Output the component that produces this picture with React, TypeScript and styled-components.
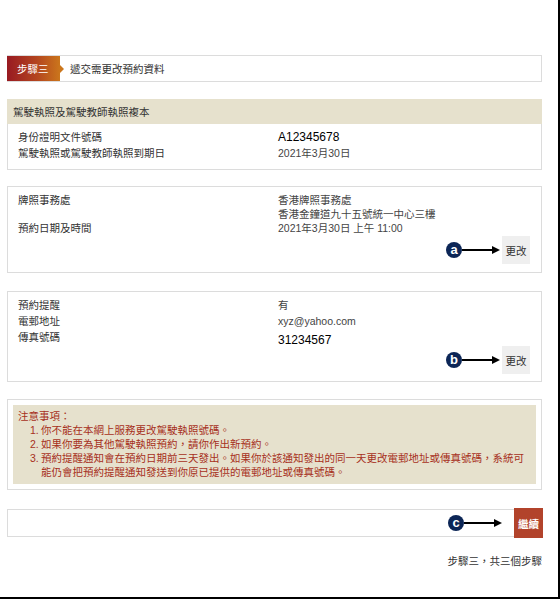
import React from "react";
import styled, { createGlobalStyle } from "styled-components";

const Global = createGlobalStyle`
  html, body { margin: 0; padding: 0; background: #fff; }
  body { font-family: "Liberation Sans", "Noto Sans CJK TC", sans-serif; }
  * { box-sizing: border-box; }
`;

const Frame = styled.div`
  width: 560px;
  height: 599px;
  border-right: 2px solid #000;
  border-bottom: 2px solid #000;
  padding: 55px 16px 0 7px;
  display: flex;
  flex-direction: column;
  font-size: 10.5px;
  color: #333;
`;

const StepBar = styled.div`
  height: 27px;
  border: 1px solid #dcdcdc;
  display: flex;
  align-items: center;
`;

const StepBadge = styled.div`
  position: relative;
  width: 53px;
  height: 25px;
  margin-left: -1px;
  background: linear-gradient(90deg, #981a22 0%, #b3441f 55%, #cb761c 100%);
  color: #fff;
  display: flex;
  align-items: center;
  padding-left: 10px;
  font-size: 10.5px;
  &::after {
    content: "";
    position: absolute;
    right: -4px;
    top: 50%;
    margin-top: -4px;
    border-left: 4px solid #cb761c;
    border-top: 4px solid transparent;
    border-bottom: 4px solid transparent;
  }
`;

const StepTitle = styled.div`
  margin-left: 10px;
  color: #333;
`;

const Box = styled.div<{ $gap: number }>`
  margin-top: ${(p) => p.$gap}px;
  border: 1px solid #dcdcdc;
  display: flex;
  flex-direction: column;
`;

const BoxHeader = styled.div`
  height: 25px;
  background: #e6e1cd;
  display: flex;
  align-items: center;
  padding-left: 6px;
  margin: -1px -1px 0;
`;

const Body = styled.div<{ $pt: number; $pb: number }>`
  padding: ${(p) => p.$pt}px 11px ${(p) => p.$pb}px 10px;
  display: flex;
  flex-direction: column;
`;

const Row = styled.div<{ $lh: number }>`
  display: grid;
  grid-template-columns: 260px 1fr;
  line-height: ${(p) => p.$lh}px;
`;

const Label = styled.div`
  color: #333;
`;

const Value = styled.div<{ $strong?: boolean; $shift?: number }>`
  color: ${(p) => (p.$strong ? "#000" : "#444")};
  font-size: ${(p) => (p.$strong ? "12px" : "10.5px")};
  padding-top: ${(p) => p.$shift ?? 0}px;
  margin-bottom: ${(p) => -(p.$shift ?? 0)}px;
`;

const ActionRow = styled.div<{ $mt: number }>`
  margin-top: ${(p) => p.$mt}px;
  display: flex;
  justify-content: flex-end;
  align-items: center;
`;

const Marker = styled.span`
  width: 16px;
  height: 16px;
  border-radius: 50%;
  background: #0c2656;
  color: #fff;
  font-size: 13px;
  font-weight: bold;
  display: flex;
  align-items: center;
  justify-content: center;
  line-height: 1;
  padding-bottom: 1px;
`;

const Arrow = styled.svg`
  display: block;
`;

const ChangeButton = styled.button`
  width: 28px;
  height: 28px;
  border: none;
  background: #efefef;
  color: #333;
  font-family: inherit;
  font-size: 10.5px;
  padding: 0;
  margin-left: 2px;
`;

const ContinueButton = styled.button`
  width: 29px;
  height: 30px;
  border: none;
  background: #b2432b;
  color: #fff;
  font-family: inherit;
  font-weight: bold;
  font-size: 10.5px;
  padding: 0;
  margin: -1px -2px -1px 12px;
`;

const Notes = styled.div`
  margin: 5px;
  background: #e6e1cd;
  padding: 4px 5px 5px;
  color: #a6301c;
  line-height: 14px;
`;

const NoteList = styled.ol`
  margin: 0;
  padding-left: 23px;
  list-style: none;
`;

const NoteItem = styled.li`
  display: flex;
`;

const NoteNum = styled.span`
  width: 11px;
  flex-shrink: 0;
  margin-left: -11px;
`;

const ContinueBox = styled.div`
  margin-top: 19px;
  height: 28px;
  border: 1px solid #dcdcdc;
  display: flex;
  justify-content: flex-end;
  align-items: center;
`;

const Footer = styled.div`
  margin-top: 16px;
  text-align: right;
  color: #333;
`;

const Pointer = ({ letter, length }: { letter: string; length: number }) => (
  <>
    <Marker>{letter}</Marker>
    <Arrow width={length} height={10} viewBox={`0 0 ${length} 10`}>
      <line x1={0} y1={5} x2={length - 6} y2={5} stroke="#000" strokeWidth={2} />
      <polygon points={`${length - 8},1 ${length},5 ${length - 8},9`} fill="#000" />
    </Arrow>
  </>
);

export default function App() {
  return (
    <>
      <Global />
      <Frame>
        <StepBar>
          <StepBadge>步驟三</StepBadge>
          <StepTitle>遞交需更改預約資料</StepTitle>
        </StepBar>

        <Box $gap={17}>
          <BoxHeader>駕駛執照及駕駛教師執照複本</BoxHeader>
          <Body $pt={5} $pb={8}>
            <Row $lh={16}>
              <Label>身份證明文件號碼</Label>
              <Value $strong>A12345678</Value>
            </Row>
            <Row $lh={16}>
              <Label>駕駛執照或駕駛教師執照到期日</Label>
              <Value>2021年3月30日</Value>
            </Row>
          </Body>
        </Box>

        <Box $gap={16}>
          <Body $pt={6} $pb={8}>
            <Row $lh={14}>
              <Label>牌照事務處</Label>
              <Value>
                香港牌照事務處
                <br />
                香港金鐘道九十五號統一中心三樓
              </Value>
            </Row>
            <Row $lh={14}>
              <Label>預約日期及時間</Label>
              <Value>2021年3月30日 上午 11:00</Value>
            </Row>
            <ActionRow $mt={1}>
              <Pointer letter="a" length={38} />
              <ChangeButton>更改</ChangeButton>
            </ActionRow>
          </Body>
        </Box>

        <Box $gap={18}>
          <Body $pt={5} $pb={7}>
            <Row $lh={16}>
              <Label>預約提醒</Label>
              <Value>有</Value>
            </Row>
            <Row $lh={16}>
              <Label>電郵地址</Label>
              <Value>xyz@yahoo.com</Value>
            </Row>
            <Row $lh={16}>
              <Label>傳真號碼</Label>
              <Value $strong $shift={3}>31234567</Value>
            </Row>
            <ActionRow $mt={1}>
              <Pointer letter="b" length={38} />
              <ChangeButton>更改</ChangeButton>
            </ActionRow>
          </Body>
        </Box>

        <Box $gap={17}>
          <Notes>
            注意事項：
            <NoteList>
              <NoteItem>
                <NoteNum>1.</NoteNum>你不能在本網上服務更改駕駛執照號碼。
              </NoteItem>
              <NoteItem>
                <NoteNum>2.</NoteNum>如果你要為其他駕駛執照預約，請你作出新預約。
              </NoteItem>
              <NoteItem>
                <NoteNum>3.</NoteNum>
                <span>
                  預約提醒通知會在預約日期前三天發出。如果你於該通知發出的同一天更改電郵地址或傳真號碼，系統可能仍會把預約提醒通知發送到你原已提供的電郵地址或傳真號碼。
                </span>
              </NoteItem>
            </NoteList>
          </Notes>
        </Box>

        <ContinueBox>
          <Pointer letter="c" length={38} />
          <ContinueButton>繼續</ContinueButton>
        </ContinueBox>

        <Footer>步驟三，共三個步驟</Footer>
      </Frame>
    </>
  );
}
